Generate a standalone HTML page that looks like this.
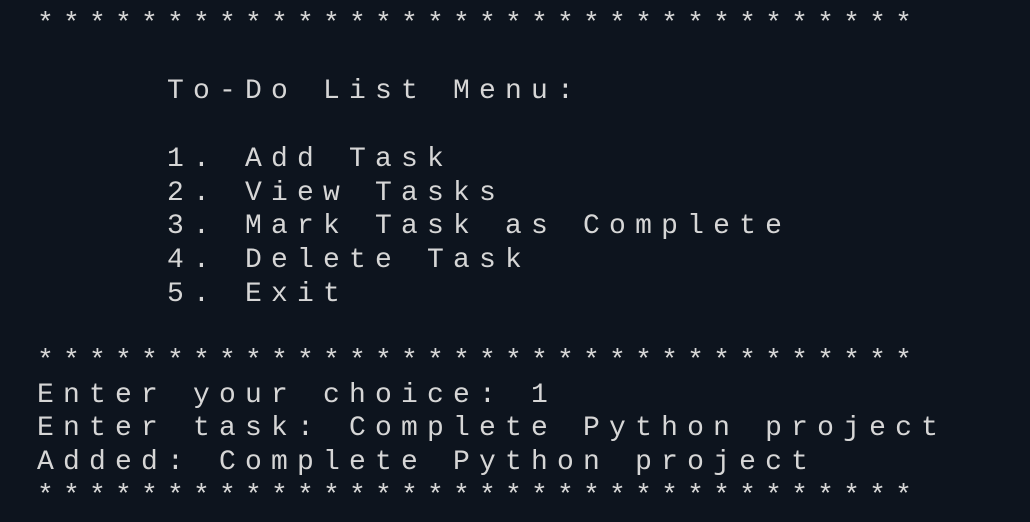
<!DOCTYPE html>
<html><head><style>
html,body{margin:0;padding:0;background:#0d141e;width:1030px;height:522px;overflow:hidden}
pre{position:absolute;left:37px;top:8px;margin:0;font-family:"Liberation Mono",monospace;font-size:28px;letter-spacing:9.2px;line-height:33.7px;color:#d6d6d6}
</style></head><body>
<pre>**********************************

     To-Do List Menu:

     1. Add Task
     2. View Tasks
     3. Mark Task as Complete
     4. Delete Task
     5. Exit

**********************************
Enter your choice: 1
Enter task: Complete Python project
Added: Complete Python project
**********************************</pre>
</body></html>
